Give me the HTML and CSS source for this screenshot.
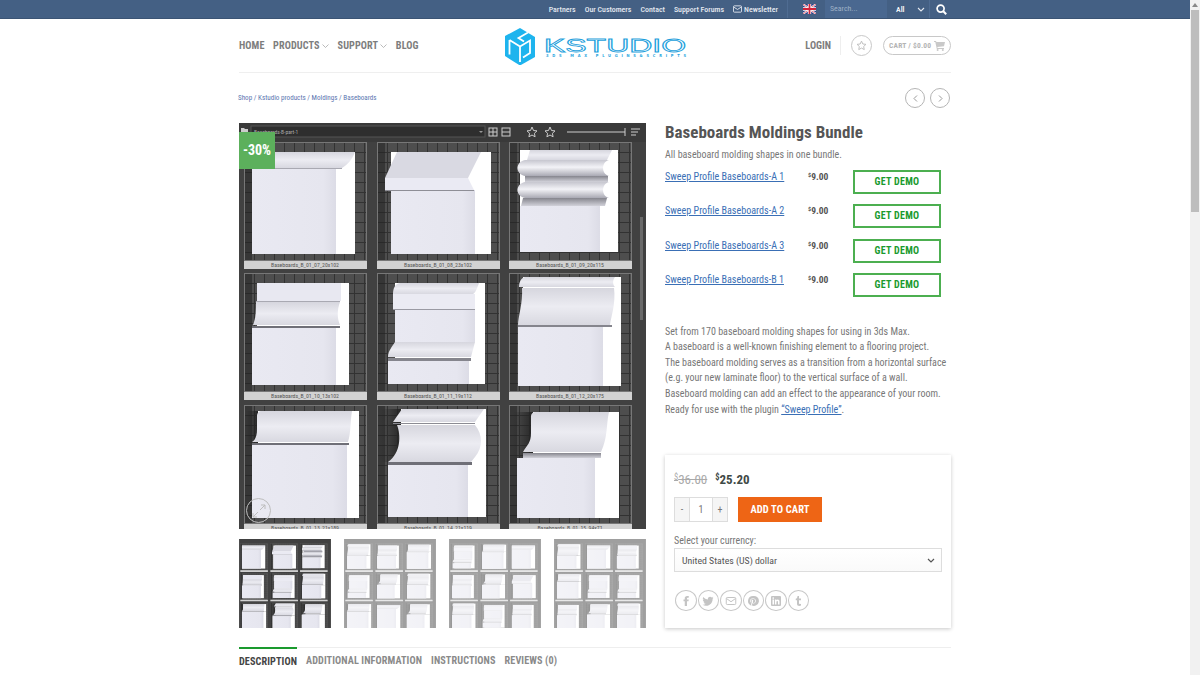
FILE: index.html
```html
<!DOCTYPE html>
<html lang="en">
<head>
    <meta charset="UTF-8">
    <meta name="viewport" content="width=device-width, initial-scale=1.0">
    <title>Baseboards Moldings Bundle</title>
    <link rel="stylesheet" href="styles.css">
</head>
<body>
    <!-- shared drawings for the product shot and its thumbnails -->
    <svg class="defs" aria-hidden="true">
        <defs>
            <pattern id="grid" width="10" height="10" patternUnits="userSpaceOnUse">
                <rect width="10" height="10" fill="#4e4e4e"/>
                <path d="M0 .5H10M.5 0V10" stroke="#323232" stroke-width="1"/>
            </pattern>
            <linearGradient id="mold" x1="0" y1="0" x2="0" y2="1">
                <stop offset="0" stop-color="#d6d6de"/>
                <stop offset=".5" stop-color="#ececf2"/>
                <stop offset="1" stop-color="#d8d8e0"/>
            </linearGradient>
            <linearGradient id="torus" x1="0" y1="0" x2="0" y2="1">
                <stop offset="0" stop-color="#c6c6cf"/>
                <stop offset=".45" stop-color="#f3f3f7"/>
                <stop offset="1" stop-color="#a9a9b3"/>
            </linearGradient>
            <linearGradient id="cove" x1="0" y1="0" x2="0" y2="1">
                <stop offset="0" stop-color="#85858d"/>
                <stop offset="1" stop-color="#d2d2da"/>
            </linearGradient>
            <linearGradient id="face" x1="0" y1="0" x2="1" y2="0">
                <stop offset="0" stop-color="#e9e9f2"/>
                <stop offset=".85" stop-color="#e6e6ef"/>
                <stop offset="1" stop-color="#dcdce6"/>
            </linearGradient>
            <linearGradient id="dusk" x1="0" y1="0" x2="1" y2="0">
                <stop offset="0" stop-color="#222" stop-opacity="0"/>
                <stop offset="1" stop-color="#222" stop-opacity=".9"/>
            </linearGradient>
            <symbol id="cell-bg" viewBox="0 0 123 127">
                <rect width="123" height="119" fill="url(#grid)"/>
                <rect width="8" height="119" fill="#232323" opacity=".55"/>
                <rect x=".5" y=".5" width="122" height="118" fill="none" stroke="#777"/>
                <rect y="119" width="123" height="8" fill="#d2d2d2"/>
            </symbol>
            <symbol id="p1" viewBox="0 0 123 127">
                <use href="#cell-bg"/>
                <rect x="8" y="10" width="103" height="102" fill="#fff"/>
                <rect x="8" y="27" width="84" height="85" fill="url(#face)"/>
                <path d="M8 10H111C108 18 104 22 98 26H8z" fill="url(#mold)"/>
                <rect x="8" y="26" width="90" height="1" fill="#a9a9b2"/>
            </symbol>
            <symbol id="p2" viewBox="0 0 123 127">
                <use href="#cell-bg"/>
                <rect x="14" y="10" width="100" height="102" fill="#fff"/>
                <rect x="14" y="48" width="84" height="64" fill="url(#face)"/>
                <path d="M20 10H104L91 36H8z" fill="#d9d9e2"/>
                <path d="M8 36H91L97 48H8z" fill="#eaeaf3"/>
                <rect x="8" y="48" width="89" height="1" fill="#8e8e96"/>
            </symbol>
            <symbol id="p3" viewBox="0 0 123 127">
                <use href="#cell-bg"/>
                <rect x="11" y="8" width="98" height="102" fill="#fff"/>
                <rect x="11" y="64" width="80" height="46" fill="url(#face)"/>
                <path d="M21 8H103L98 18H18z" fill="url(#mold)"/>
                <path d="M16 18H100C92 20 92 32 100 34H16C6 32 6 20 16 18z" fill="url(#torus)"/>
                <rect x="16" y="34" width="83" height="6" fill="url(#cove)"/>
                <path d="M16 40H100C92 42 92 54 100 56H16C6 54 6 42 16 40z" fill="url(#torus)"/>
                <path d="M14 56H98L96 64H12z" fill="url(#cove)"/>
            </symbol>
            <symbol id="p4" viewBox="0 0 123 127">
                <use href="#cell-bg"/>
                <rect x="13" y="10" width="92" height="102" fill="#fff"/>
                <rect x="13" y="10" width="84" height="18" fill="#e8e8f1"/>
                <rect x="12" y="28" width="84" height="1" fill="#a9a9b2"/>
                <path d="M12 29H96C93 37 93 45 96 52H9C12 45 12 37 12 29z" fill="url(#mold)"/>
                <rect x="8" y="53" width="88" height="2" fill="#6f6f77"/>
                <rect x="8" y="55" width="84" height="57" fill="url(#face)"/>
            </symbol>
            <symbol id="p5" viewBox="0 0 123 127">
                <use href="#cell-bg"/>
                <rect x="18" y="10" width="90" height="101" fill="#fff"/>
                <path d="M23 10H102C100 16 98 20 96 21H16C16 15 18 11 23 10z" fill="url(#mold)"/>
                <rect x="16" y="21" width="82" height="15" fill="#ebebf3"/>
                <rect x="16" y="36" width="82" height="1" fill="#9a9aa3"/>
                <rect x="18" y="37" width="80" height="32" fill="url(#face)"/>
                <path d="M18 69H98L94 84H11C11 78 15 74 18 69z" fill="url(#mold)"/>
                <rect x="11" y="85" width="83" height="3" fill="#85858d"/>
                <rect x="11" y="88" width="81" height="23" fill="url(#face)"/>
            </symbol>
            <symbol id="p6" viewBox="0 0 123 127">
                <use href="#cell-bg"/>
                <rect x="9" y="54" width="103" height="59" fill="#fff"/>
                <rect x="14" y="4" width="98" height="50" fill="#fff"/>
                <path d="M16 4H106C103 8 104 12 106 14H10C10 9 12 5 16 4z" fill="url(#mold)"/>
                <path d="M13 15H105C107 30 102 44 101 52H9C9 44 14 30 13 15z" fill="url(#mold)"/>
                <rect x="9" y="52" width="94" height="2" fill="#85858d"/>
                <rect x="9" y="54" width="85" height="59" fill="url(#face)"/>
            </symbol>
            <symbol id="p7" viewBox="0 0 123 127">
                <use href="#cell-bg"/>
                <rect x="2" y="6" width="12" height="32" fill="url(#dusk)"/>
                <rect x="14" y="6" width="101" height="32" fill="#fff"/>
                <rect x="8" y="38" width="107" height="75" fill="#fff"/>
                <path d="M18 6H108C106 18 107 28 104 37H8C12 34 13 30 13 24V11C13 8 15 6 18 6z" fill="url(#mold)"/>
                <rect x="8" y="38" width="97" height="2" fill="#6f6f77"/>
                <rect x="8" y="40" width="95" height="73" fill="url(#face)"/>
            </symbol>
            <symbol id="p8" viewBox="0 0 123 127">
                <use href="#cell-bg"/>
                <rect x="4" y="4" width="20" height="53" fill="url(#dusk)"/>
                <rect x="24" y="4" width="85" height="53" fill="#fff"/>
                <rect x="11" y="57" width="98" height="55" fill="#fff"/>
                <path d="M25 4H107L98 17H16z" fill="url(#mold)"/>
                <rect x="16" y="18" width="82" height="1" fill="#8b8b93"/>
                <path d="M20 20H98C106 30 106 42 98 52L94 57H11C24 48 24 30 20 20z" fill="url(#mold)"/>
                <rect x="11" y="57" width="84" height="3" fill="#6f6f77"/>
                <rect x="11" y="60" width="80" height="52" fill="url(#face)"/>
            </symbol>
            <symbol id="p9" viewBox="0 0 123 127">
                <use href="#cell-bg"/>
                <rect x="4" y="7" width="20" height="46" fill="url(#dusk)"/>
                <rect x="24" y="7" width="86" height="46" fill="#fff"/>
                <rect x="8" y="53" width="102" height="60" fill="#fff"/>
                <path d="M26 7H100C97 20 99 32 92 47H14C18 40 22 38 22 28V11C22 9 24 7 26 7z" fill="url(#mold)"/>
                <rect x="14" y="48" width="78" height="5" fill="url(#cove)"/>
                <rect x="8" y="53" width="78" height="60" fill="url(#face)"/>
            </symbol>
            <symbol id="sheet-a" viewBox="0 0 407 406">
                <rect width="407" height="406" fill="#414141"/>
                <use href="#p1" x="5" y="19" width="123" height="127"/>
                <use href="#p2" x="138" y="19" width="123" height="127"/>
                <use href="#p3" x="270" y="19" width="123" height="127"/>
                <use href="#p4" x="5" y="150" width="123" height="127"/>
                <use href="#p5" x="138" y="150" width="123" height="127"/>
                <use href="#p6" x="270" y="150" width="123" height="127"/>
                <use href="#p7" x="5" y="282" width="123" height="127"/>
                <use href="#p8" x="138" y="282" width="123" height="127"/>
                <use href="#p9" x="270" y="282" width="123" height="127"/>
            </symbol>
            <symbol id="sheet-b" viewBox="0 0 407 406">
                <rect width="407" height="406" fill="#414141"/>
                <use href="#p6" x="5" y="19" width="123" height="127"/>
                <use href="#p4" x="138" y="19" width="123" height="127"/>
                <use href="#p7" x="270" y="19" width="123" height="127"/>
                <use href="#p5" x="5" y="150" width="123" height="127"/>
                <use href="#p9" x="138" y="150" width="123" height="127"/>
                <use href="#p6" x="270" y="150" width="123" height="127"/>
                <use href="#p7" x="5" y="282" width="123" height="127"/>
                <use href="#p1" x="138" y="282" width="123" height="127"/>
                <use href="#p9" x="270" y="282" width="123" height="127"/>
            </symbol>
            <symbol id="sheet-c" viewBox="0 0 407 406">
                <rect width="407" height="406" fill="#414141"/>
                <use href="#p5" x="5" y="19" width="123" height="127"/>
                <use href="#p7" x="138" y="19" width="123" height="127"/>
                <use href="#p1" x="270" y="19" width="123" height="127"/>
                <use href="#p4" x="5" y="150" width="123" height="127"/>
                <use href="#p9" x="138" y="150" width="123" height="127"/>
                <use href="#p2" x="270" y="150" width="123" height="127"/>
                <use href="#p6" x="5" y="282" width="123" height="127"/>
                <use href="#p5" x="138" y="282" width="123" height="127"/>
                <use href="#p4" x="270" y="282" width="123" height="127"/>
            </symbol>
            <symbol id="sheet-d" viewBox="0 0 407 406">
                <rect width="407" height="406" fill="#414141"/>
                <use href="#p6" x="5" y="19" width="123" height="127"/>
                <use href="#p1" x="138" y="19" width="123" height="127"/>
                <use href="#p4" x="270" y="19" width="123" height="127"/>
                <use href="#p7" x="5" y="150" width="123" height="127"/>
                <use href="#p5" x="138" y="150" width="123" height="127"/>
                <use href="#p5" x="270" y="150" width="123" height="127"/>
                <use href="#p4" x="5" y="282" width="123" height="127"/>
                <use href="#p9" x="138" y="282" width="123" height="127"/>
                <use href="#p6" x="270" y="282" width="123" height="127"/>
            </symbol>
        </defs>
    </svg>

    <div class="page">
        <!-- top bar -->
        <div class="topbar">
            <a href="#">Partners</a>
            <a href="#">Our Customers</a>
            <a href="#">Contact</a>
            <a href="#">Support Forums</a>
            <a href="#" class="top-mail">
                <svg width="9" height="8" viewBox="0 0 10 8"><rect x=".5" y=".5" width="9" height="7" rx="1" fill="none" stroke="#e4e9f0"/><path d="M1 2l4 2.500L9 2" fill="none" stroke="#e4e9f0"/></svg>
                Newsletter
            </a>
            <div class="top-flag">
                <svg width="13" height="10" viewBox="0 0 13 10">
                    <rect width="13" height="10" fill="#2b3f87"/>
                    <path d="M0 0L13 10M13 0L0 10" stroke="#fff" stroke-width="2"/>
                    <path d="M0 0L13 10M13 0L0 10" stroke="#d0243a" stroke-width=".7"/>
                    <path d="M6.500 0V10M0 5H13" stroke="#fff" stroke-width="3.400"/>
                    <path d="M6.500 0V10M0 5H13" stroke="#d0243a" stroke-width="1.800"/>
                </svg>
            </div>
            <div class="top-search">Search...</div>
            <div class="top-all">
                <span>All</span>
                <svg width="8" height="5" viewBox="0 0 8 5"><path d="M1 1l3 3 3-3" fill="none" stroke="#e4e9f0" stroke-width="1.100"/></svg>
            </div>
            <div class="top-glass">
                <svg width="11" height="11" viewBox="0 0 11 11"><circle cx="4.600" cy="4.600" r="3.500" fill="none" stroke="#fff" stroke-width="1.700"/><path d="M7.300 7.300L10.200 10.200" stroke="#fff" stroke-width="2"/></svg>
            </div>
        </div>

        <div class="container">
            <!-- header -->
            <header class="header">
                <nav class="nav">
                    <a href="#">Home</a>
                    <a href="#">Products <svg class="nav-caret" width="7" height="4" viewBox="0 0 7 4"><path d="M.5.500l3 3 3-3" fill="none" stroke="#aaa" stroke-width=".8"/></svg></a>
                    <a href="#">Support <svg class="nav-caret" width="7" height="4" viewBox="0 0 7 4"><path d="M.5.500l3 3 3-3" fill="none" stroke="#aaa" stroke-width=".8"/></svg></a>
                    <a href="#">Blog</a>
                </nav>
                <a href="#" class="logo">
                    <svg width="182" height="38" viewBox="0 0 182 38">
                        <path d="M15 1L30 10V30L15 38.500 0 29V9z" fill="#1eb4ee"/>
                        <path d="M23 5.500L13.500 11 19 14.500M4.500 13L15 19.500 25 13.500V26L18 30.500M4.500 13V27.500M15 19.500V35" fill="none" stroke="#fff" stroke-width="1.800"/>
                        <text>
                            <tspan class="logo-word" x="39" y="24.500" textLength="142" lengthAdjust="spacingAndGlyphs">KSTUDIO</tspan>
                            <tspan class="logo-sub" x="41" y="29.500" textLength="140" lengthAdjust="spacing">3DS MAX PLUGINS&amp;SCRIPTS</tspan>
                        </text>
                    </svg>
                </a>
                <div class="header-right">
                    <a href="#" class="login">Login</a>
                    <span class="header-divider"></span>
                    <a href="#" class="wish">
                        <svg width="11" height="11" viewBox="0 0 24 24"><path d="M12 2.500l2.900 6.200 6.800.8-5 4.700 1.300 6.700-6-3.300-6 3.300 1.300-6.700-5-4.700 6.800-.8z" fill="none" stroke="#bbb" stroke-width="2"/></svg>
                    </a>
                    <a href="#" class="cart">
                        <span>Cart / $0.00</span>
                        <svg width="11" height="10" viewBox="0 0 11 10"><path d="M0 0h2l.4 1H11l-1 4.300-6.700.8.300 1H10v.9H2.800L1.300 1H0z" fill="#c9c9c9"/><circle cx="3.600" cy="9" r="1" fill="#c9c9c9"/><circle cx="8.800" cy="9" r="1" fill="#c9c9c9"/></svg>
                    </a>
                </div>
            </header>

            <div class="crumbs">
                <div class="breadcrumb">Shop / Kstudio products / Moldings / Baseboards</div>
                <div class="pager">
                    <a href="#"><svg width="5" height="7" viewBox="0 0 5 7"><path d="M4 .5l-3 3 3 3" fill="none" stroke="#999"/></svg></a>
                    <a href="#"><svg width="5" height="7" viewBox="0 0 5 7"><path d="M1 .5l3 3-3 3" fill="none" stroke="#999"/></svg></a>
                </div>
            </div>

            <main class="product">
                <!-- gallery -->
                <div class="gallery">
                    <div class="shot">
                        <svg width="407" height="406" viewBox="0 0 407 406">
                            <use href="#sheet-a" width="407" height="406"/>
                            <!-- browser toolbar inside the shot -->
                            <rect width="407" height="19" fill="#3a3a3a"/>
                            <rect x="12" y="3" width="234" height="11" fill="#2e2e2e" stroke="#555"/>
                            <path d="M2 5h3l1 1h3v6H2z" fill="#ccc"/>
                            <text class="shot-path" x="15" y="11">Baseboards-B-part-1</text>
                            <path d="M240 8l2 2 2-2" fill="#999"/>
                            <g fill="none" stroke="#ccc">
                                <rect x="250" y="5" width="8" height="8"/>
                                <path d="M254 5v8M250 9h8"/>
                                <rect x="263" y="5" width="8" height="8"/>
                                <path d="M263 9h8"/>
                                <path d="M293 4l1.500 3.500 3.500.4-2.600 2.400.7 3.500-3.100-1.800-3.100 1.800.7-3.500-2.600-2.400 3.500-.4z"/>
                                <path d="M311 4l1.500 3.500 3.500.4-2.600 2.400.7 3.500-3.100-1.800-3.100 1.800.7-3.500-2.600-2.400 3.500-.4z"/>
                                <path d="M328 9h58M386 5v8"/>
                                <path d="M392 6h9M392 9h7M392 12h5"/>
                            </g>
                            <rect x="401" y="94" width="3" height="103" fill="#6a6a6a"/>
                            <g class="shot-label">
                                <text x="66" y="144">Baseboards_B_01_07_20x102</text>
                                <text x="199" y="144">Baseboards_B_01_08_23x102</text>
                                <text x="331" y="144">Baseboards_B_01_09_20x115</text>
                                <text x="66" y="275">Baseboards_B_01_10_13x102</text>
                                <text x="199" y="275">Baseboards_B_01_11_19x112</text>
                                <text x="331" y="275">Baseboards_B_01_12_20x175</text>
                                <text x="66" y="407">Baseboards_B_01_13_21x189</text>
                                <text x="199" y="407">Baseboards_B_01_14_21x119</text>
                                <text x="331" y="407">Baseboards_B_01_15_94x71</text>
                            </g>
                        </svg>
                        <div class="badge">-30%</div>
                        <div class="zoom">
                            <svg width="16" height="16" viewBox="0 0 16 16"><path d="M9 7l5-5M10 2h4v4M7 9l-5 5M2 10v4h4" fill="none" stroke="#bdbdbd" stroke-width="1"/></svg>
                        </div>
                    </div>
                    <div class="thumbs">
                        <svg class="thumb" viewBox="0 0 407 394"><use href="#sheet-a" width="407" height="406"/></svg>
                        <svg class="thumb thumb-off" viewBox="0 0 407 394"><use href="#sheet-b" width="407" height="406"/></svg>
                        <svg class="thumb thumb-off" viewBox="0 0 407 394"><use href="#sheet-c" width="407" height="406"/></svg>
                        <svg class="thumb thumb-off" viewBox="0 0 407 394"><use href="#sheet-d" width="407" height="406"/></svg>
                    </div>
                </div>

                <!-- summary -->
                <div class="summary">
                    <h1 class="product-title">Baseboards Moldings Bundle</h1>
                    <p class="lead">All baseboard molding shapes in one bundle.</p>
                    <div class="items">
                        <div class="item">
                            <a href="#" class="item-link">Sweep Profile Baseboards-A 1</a>
                            <span class="item-price"><sup>$</sup>9.00</span>
                            <a href="#" class="demo">Get Demo</a>
                        </div>
                        <div class="item">
                            <a href="#" class="item-link">Sweep Profile Baseboards-A 2</a>
                            <span class="item-price"><sup>$</sup>9.00</span>
                            <a href="#" class="demo">Get Demo</a>
                        </div>
                        <div class="item">
                            <a href="#" class="item-link">Sweep Profile Baseboards-A 3</a>
                            <span class="item-price"><sup>$</sup>9.00</span>
                            <a href="#" class="demo">Get Demo</a>
                        </div>
                        <div class="item">
                            <a href="#" class="item-link">Sweep Profile Baseboards-B 1</a>
                            <span class="item-price"><sup>$</sup>9.00</span>
                            <a href="#" class="demo">Get Demo</a>
                        </div>
                    </div>
                    <p class="about">
                        Set from 170 baseboard molding shapes for using in 3ds Max.<br>
                        A baseboard is a well-known finishing element to a flooring project.<br>
                        The baseboard molding serves as a transition from a horizontal surface<br>
                        (e.g. your new laminate floor) to the vertical surface of a wall.<br>
                        Baseboard molding can add an effect to the appearance of your room.<br>
                        Ready for use with the plugin <a href="#">“Sweep Profile”</a>.
                    </p>
                    <div class="buy-card">
                        <div class="prices">
                            <del><sup>$</sup>36.00</del>
                            <strong><sup>$</sup>25.20</strong>
                        </div>
                        <div class="buy-row">
                            <div class="qty">
                                <span class="qty-btn">-</span>
                                <span class="qty-num">1</span>
                                <span class="qty-btn">+</span>
                            </div>
                            <a href="#" class="add-cart">Add to cart</a>
                        </div>
                        <div class="currency-label">Select your currency:</div>
                        <div class="currency">
                            <span>United States (US) dollar</span>
                            <svg width="8" height="5" viewBox="0 0 8 5"><path d="M1 1l3 3 3-3" fill="none" stroke="#555" stroke-width="1.200"/></svg>
                        </div>
                        <div class="share">
                            <a href="#"><svg viewBox="0 0 24 24"><path d="M14 9V6.800C14 5.800 14.600 5.500 15.200 5.500H17.500V2H14.400C11 2 9.500 4 9.500 6.500V9H7V12.500H9.500V22H14V12.500H17L17.500 9z"/></svg></a>
                            <a href="#"><svg viewBox="0 0 24 24"><path d="M23 5.500C22.200 5.900 21.300 6.100 20.400 6.200 21.300 5.600 22 4.800 22.400 3.700 21.500 4.200 20.500 4.600 19.500 4.800A4.600 4.600 0 0 0 11.700 9 13 13 0 0 1 2.300 4.200 4.600 4.600 0 0 0 3.700 10.300C3 10.300 2.300 10.100 1.700 9.700 1.700 11.900 3.300 13.800 5.400 14.300 4.700 14.500 4 14.500 3.300 14.400 3.900 16.200 5.600 17.600 7.600 17.600A9.200 9.200 0 0 1 1 19.500 13 13 0 0 0 8 21.500C16.500 21.500 21.200 14.500 21.200 8.300V7.700C22 7.100 22.700 6.300 23 5.500z"/></svg></a>
                            <a href="#"><svg viewBox="0 0 24 24"><rect x="2.500" y="5" width="19" height="14" rx="2" fill="none" stroke="#c4c4c4" stroke-width="2"/><path d="M3 7l9 6.500L21 7" fill="none" stroke="#c4c4c4" stroke-width="2"/></svg></a>
                            <a href="#"><svg viewBox="0 0 24 24"><path d="M12 2A10 10 0 0 0 8.400 21.300C8.300 20.500 8.200 19.300 8.400 18.400L9.600 13.400S9.300 12.800 9.300 11.900C9.300 10.500 10.100 9.500 11.100 9.500 12 9.500 12.400 10.100 12.400 10.900 12.400 11.800 11.900 13 11.600 14.200 11.400 15.200 12.100 16 13.100 16 14.900 16 16.200 14.100 16.200 11.400 16.200 9 14.500 7.300 12 7.300 9.200 7.300 7.500 9.400 7.500 11.600 7.500 12.500 7.800 13.400 8.200 13.900L7.900 15C6.800 14.500 6.100 13 6.100 11.600 6.100 8.800 8.100 6.300 12.100 6.300 15.200 6.300 17.700 8.500 17.700 11.500 17.700 14.600 15.700 17.100 13 17.100 12.100 17.100 11.200 16.600 10.900 16.100L10.300 18.300C10.100 19.100 9.500 20.100 9.200 20.700A10 10 0 1 0 12 2z"/></svg></a>
                            <a href="#"><svg viewBox="0 0 24 24"><path d="M20 2H4A2 2 0 0 0 2 4V20A2 2 0 0 0 4 22H20A2 2 0 0 0 22 20V4A2 2 0 0 0 20 2zM8 19H5V9H8zM6.500 7.700A1.700 1.700 0 1 1 6.500 4.300 1.700 1.700 0 0 1 6.500 7.700zM19 19H16V14C16 12.800 15.500 12 14.500 12S12.800 12.800 12.800 14V19H9.800V9H12.800V10.300C13.300 9.500 14.200 8.800 15.500 8.800 17.700 8.800 19 10.200 19 13z"/></svg></a>
                            <a href="#"><svg viewBox="0 0 24 24"><path d="M14 2V7H18V10.500H14V16C14 17.500 14.700 18.200 16 18.200 16.800 18.200 17.500 18 18 17.700V21C17.200 21.500 16 21.800 14.700 21.800 11.700 21.800 10 20.100 10 17.300V10.500H7.500V7.500C10 7 11 5 11 2z"/></svg></a>
                        </div>
                    </div>
                </div>
            </main>

            <div class="tabs">
                <a href="#" class="tab-active">Description</a>
                <a href="#">Additional information</a>
                <a href="#">Instructions</a>
                <a href="#">Reviews (0)</a>
            </div>
        </div>
    </div>

    <!-- page scrollbar -->
    <div class="scrollbar">
        <svg width="6" height="4" viewBox="0 0 6 4"><path d="M3 0l3 4H0z" fill="#888"/></svg>
        <div class="scrollbar-thumb"></div>
    </div>
</body>
</html>
```

FILE: styles.css
```css
* {
    box-sizing: border-box;
}

html, body {
    margin: 0;
    height: 675px;
    overflow: hidden;
}

body {
    font-family: Roboto, "Liberation Sans", sans-serif;
    font-size: 10px;
    font-stretch: 75%;
    color: #777;
    background: #fff;
}

a {
    color: inherit;
    text-decoration: none;
}

.defs {
    position: absolute;
    width: 0;
    height: 0;
}

.page {
    width: 1190px;
}

/* Top bar */
.topbar {
    display: flex;
    justify-content: flex-end;
    align-items: center;
    height: 19px;
    padding-right: 237px;
    background: #446084;
    border-bottom: 1px solid #3b5474;
    color: #e4e9f0;
    font-size: 7.9px;
    font-weight: 500;
}

.topbar a {
    margin-left: 9px;
}

.top-mail {
    display: flex;
    align-items: center;
    gap: 2px;
}

.top-flag {
    display: flex;
    align-items: center;
    justify-content: center;
    width: 38px;
    height: 18px;
    margin-left: 9px;
    padding-left: 6px;
    border-left: 1px solid #4f6c92;
}

.top-search {
    width: 62px;
    height: 18px;
    line-height: 18px;
    padding-left: 5px;
    background: #4a6890;
    color: #9fb0c6;
    font-weight: 400;
}

.top-all {
    display: flex;
    align-items: center;
    justify-content: space-between;
    width: 43px;
    height: 18px;
    padding: 0 4px 0 9px;
    border-right: 1px solid #4f6c92;
    color: #fff;
}

.top-glass {
    display: flex;
    align-items: center;
    justify-content: center;
    width: 23px;
    height: 18px;
}

.container {
    width: 712px;
    margin: 0 auto;
}

/* Header */
.header {
    display: flex;
    align-items: center;
    height: 54px;
    border-bottom: 1px solid #efefef;
}

.nav {
    display: flex;
    gap: 8.5px;
    width: 266px;
    font-size: 10.2px;
    font-weight: 700;
    letter-spacing: .1px;
    text-transform: uppercase;
    color: #7d7d7d;
}

.nav-caret {
    vertical-align: 1px;
}

.logo {
    display: block;
    height: 38px;
    flex: none;
}

.logo-word {
    font-family: "Liberation Sans", sans-serif;
    font-size: 18px;
    fill: #fff;
    stroke: #1e9fdc;
    stroke-width: .8px;
}

.logo-sub {
    font-family: "DejaVu Sans", sans-serif;
    font-size: 4px;
    font-weight: 700;
    fill: #2aa5de;
}

.header-right {
    display: flex;
    align-items: center;
    margin-left: auto;
}

.login {
    font-size: 10.2px;
    font-weight: 700;
    text-transform: uppercase;
    color: #7d7d7d;
}

.header-divider {
    width: 1px;
    height: 19px;
    margin: 0 10px 0 9px;
    background: #eee;
}

.wish {
    display: flex;
    align-items: center;
    justify-content: center;
    width: 21px;
    height: 21px;
    border: 1px solid #c8c8c8;
    border-radius: 50%;
}

.cart {
    display: flex;
    align-items: center;
    justify-content: space-between;
    width: 68px;
    height: 19px;
    margin-left: 11px;
    padding: 0 5px 0 5px;
    border: 1px solid #c8c8c8;
    border-radius: 10px;
    font-size: 7.5px;
    font-weight: 700;
    letter-spacing: .2px;
    text-transform: uppercase;
    white-space: nowrap;
    color: #b4b4b4;
}

/* Breadcrumb row */
.crumbs {
    display: flex;
    align-items: center;
    justify-content: space-between;
    height: 50px;
}

.breadcrumb {
    margin: 0 0 2px -1px;
    font-size: 7.1px;
    color: #5b76b0;
}

.pager {
    display: flex;
    gap: 5px;
    margin-right: 1px;
}

.pager a {
    display: flex;
    align-items: center;
    justify-content: center;
    width: 20px;
    height: 20px;
    border: 1px solid #b5b5b5;
    border-radius: 50%;
}

/* Product */
.product {
    display: flex;
    gap: 19px;
}

.gallery {
    width: 407px;
    flex: none;
}

.shot {
    position: relative;
    height: 406px;
}

.shot svg {
    display: block;
}

.shot-path {
    font-size: 5.5px;
    fill: #aaa;
}

.shot-label text {
    font-size: 5.8px;
    fill: #555;
    text-anchor: middle;
}

.badge {
    position: absolute;
    top: 9px;
    left: 0;
    width: 36px;
    height: 37px;
    line-height: 37px;
    background: #5cb05c;
    color: #fff;
    font-size: 14px;
    font-weight: 700;
    text-align: center;
}

.zoom {
    position: absolute;
    left: 7px;
    bottom: 6px;
    display: flex;
    align-items: center;
    justify-content: center;
    width: 25px;
    height: 25px;
    border: 1px solid #bdbdbd;
    border-radius: 50%;
}

.thumbs {
    display: grid;
    grid-template-columns: repeat(4, 92px);
    gap: 13px;
    margin-top: 10px;
}

.thumb {
    display: block;
    width: 92px;
    height: 89px;
}

.thumb-off {
    opacity: .5;
}

/* Summary */
.summary {
    width: 286px;
}

.product-title {
    margin: 0;
    height: 18px;
    line-height: 18px;
    font-size: 17px;
    font-weight: 700;
    color: #555;
    white-space: nowrap;
}

.lead {
    margin: 6px 0 0;
    line-height: 15px;
}

.items {
    margin-top: 8px;
}

.item {
    display: flex;
    height: 34.4px;
}

.item-link {
    width: 143px;
    font-size: 10.1px;
    line-height: 14px;
    color: #3a6fb5;
    text-decoration: underline;
    white-space: nowrap;
}

.item-price {
    width: 45px;
    line-height: 14px;
    font-size: 9.5px;
    font-weight: 700;
    color: #555;
}

sup {
    font-size: 65%;
    line-height: 0;
    vertical-align: .45em;
}

.demo {
    width: 88px;
    height: 24px;
    line-height: 20px;
    border: 2px solid #4caf50;
    font-size: 10px;
    font-weight: 700;
    letter-spacing: .3px;
    text-align: center;
    text-transform: uppercase;
    color: #1a9a2e;
}

.about {
    margin: 16px 0 0;
    line-height: 15.6px;
    white-space: nowrap;
}

.about a {
    color: #3a6fb5;
    text-decoration: underline;
}

.buy-card {
    height: 173px;
    margin-top: 38px;
    padding: 17px 9px 0;
    background: #fff;
    box-shadow: 0 1px 4px rgba(0, 0, 0, .22);
}

.prices {
    display: flex;
    align-items: baseline;
    gap: 8px;
    height: 20px;
    font-size: 13px;
}

.prices del {
    color: #aaa;
}

.prices strong {
    color: #3f4a46;
}

.buy-row {
    display: flex;
    gap: 10px;
    margin-top: 5px;
}

.qty {
    display: flex;
    width: 54px;
    height: 25px;
    border: 1px solid #ddd;
}

.qty-btn {
    width: 14px;
    line-height: 23px;
    background: #f5f5f5;
    text-align: center;
}

.qty-num {
    flex: 1;
    line-height: 23px;
    border-left: 1px solid #ddd;
    border-right: 1px solid #ddd;
    text-align: center;
}

.add-cart {
    width: 84px;
    height: 25px;
    line-height: 25px;
    background: #ee6515;
    color: #fff;
    font-size: 10.5px;
    font-weight: 700;
    letter-spacing: .1px;
    text-align: center;
    text-transform: uppercase;
}

.currency-label {
    margin-top: 11px;
    line-height: 15px;
}

.currency {
    display: flex;
    align-items: center;
    justify-content: space-between;
    height: 24px;
    padding: 0 6px 0 7px;
    border: 1px solid #ddd;
    background: linear-gradient(#fff, #fafafa);
    font-size: 9.8px;
    color: #555;
}

.share {
    display: flex;
    gap: 1px;
    margin-top: 18px;
    margin-left: 1px;
}

.share a {
    display: flex;
    align-items: center;
    justify-content: center;
    width: 21.5px;
    height: 21px;
    border: 1.5px solid #c8c8c8;
    border-radius: 50%;
}

.share svg {
    width: 12px;
    height: 12px;
    fill: #c4c4c4;
}

/* Tabs */
.tabs {
    display: flex;
    gap: 9px;
    height: 27px;
    margin-top: 19px;
    border-top: 1px solid #eee;
    font-size: 10.2px;
    font-weight: 700;
    letter-spacing: .1px;
    text-transform: uppercase;
    color: #8a8a8a;
}

.tabs a {
    padding-top: 7px;
}

.tab-active {
    margin-top: -1px;
    border-top: 2px solid #1a9a2e;
    color: #444;
}

/* Scrollbar */
.scrollbar {
    position: absolute;
    top: 0;
    right: 0;
    width: 10px;
    height: 675px;
    background: #f1f1f1;
    text-align: center;
    line-height: 8px;
}

.scrollbar-thumb {
    position: absolute;
    top: 10px;
    left: 1px;
    width: 8px;
    height: 202px;
    background: #bdbdbd;
}
```
